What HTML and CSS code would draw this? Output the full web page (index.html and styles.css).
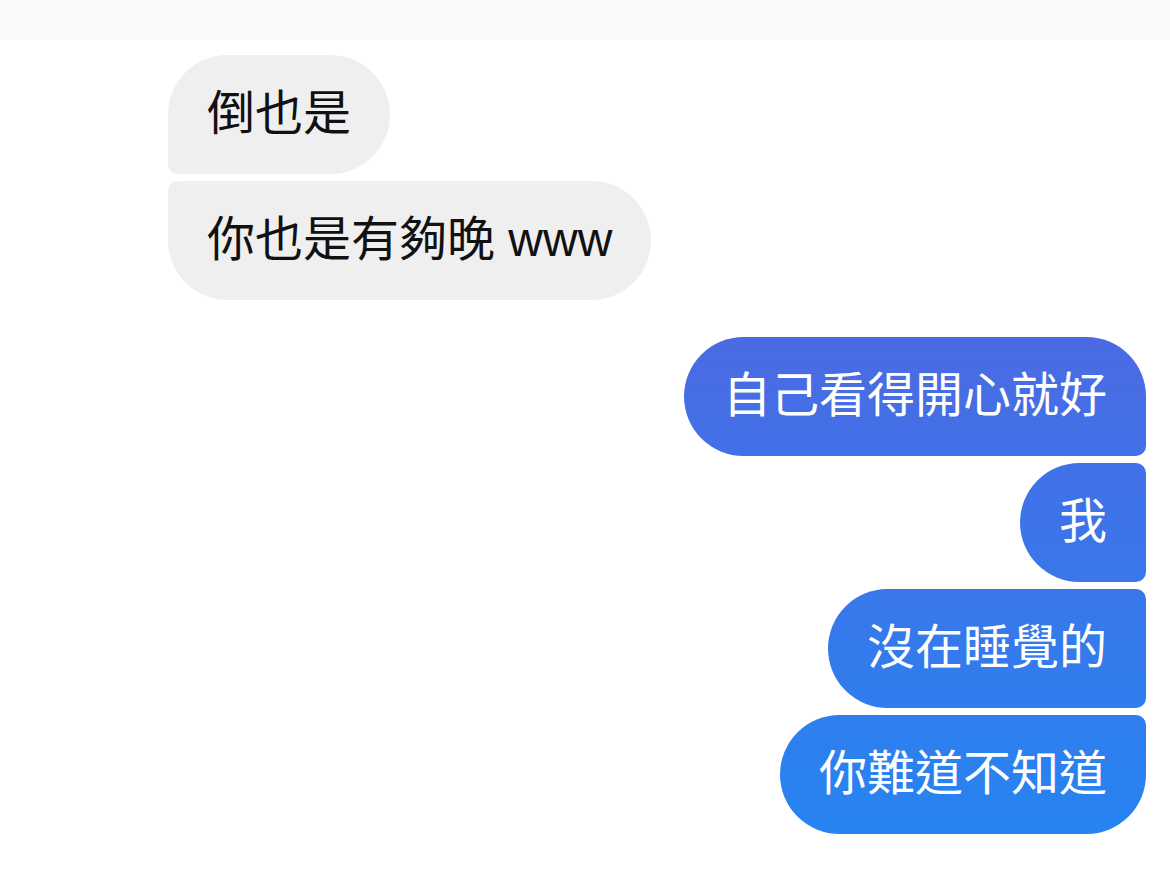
FILE: index.html
```html
<!DOCTYPE html>
<html lang="zh-Hant">
<head>
  <meta charset="UTF-8" />
  <meta name="viewport" content="width=device-width, initial-scale=1.0"/>
  <title>Messages</title>
  <link rel="stylesheet" href="styles.css">
</head>
<body>

  <header class="topbar"></header>

  <main class="thread">
    <!-- Their messages -->
    <div class="group them">
      <div class="bubble">倒也是</div>
      <div class="bubble">你也是有夠晚 www</div>
    </div>

    <!-- My messages -->
    <div class="group me">
      <div class="bubble">自己看得開心就好</div>
      <div class="bubble">我</div>
      <div class="bubble">沒在睡覺的</div>
      <div class="bubble">你難道不知道</div>
    </div>
  </main>

</body>
</html>
```

FILE: styles.css
```css
body {
  margin: 0;
  background-color: #fff;
  font-family: "Liberation Sans", "Noto Sans CJK TC", sans-serif;
}

.topbar {
  height: 40px;
  background-color: #fafafa;
}

.thread {
  padding: 15px 24px 0 168px;
  display: flex;
  flex-direction: column;
  gap: 37px;
}

.group {
  display: flex;
  flex-direction: column;
  gap: 7px;
}

.group.them {
  align-items: flex-start;
}

.group.me {
  align-items: flex-end;
}

.bubble {
  font-size: 48px;
  line-height: 57px;
  padding: 30px 39px 32px;
  border-radius: 60px;
  white-space: nowrap;
}

/* incoming: grey, tight corners on the left where bubbles stack */
.them .bubble {
  background-color: #efefef;
  color: #111;
}

.them .bubble:first-child {
  border-bottom-left-radius: 10px;
}

.them .bubble:last-child {
  border-top-left-radius: 10px;
}

/* outgoing: blue gradient fixed to the screen, tight corners on the right */
.me .bubble {
  color: #fff;
  background-image: linear-gradient(to bottom, #4b6ae3 330px, #2684f2 840px);
  background-attachment: fixed;
  border-top-right-radius: 10px;
  border-bottom-right-radius: 10px;
}

.me .bubble:first-child {
  border-top-right-radius: 60px;
}

.me .bubble:last-child {
  border-bottom-right-radius: 60px;
}
```
